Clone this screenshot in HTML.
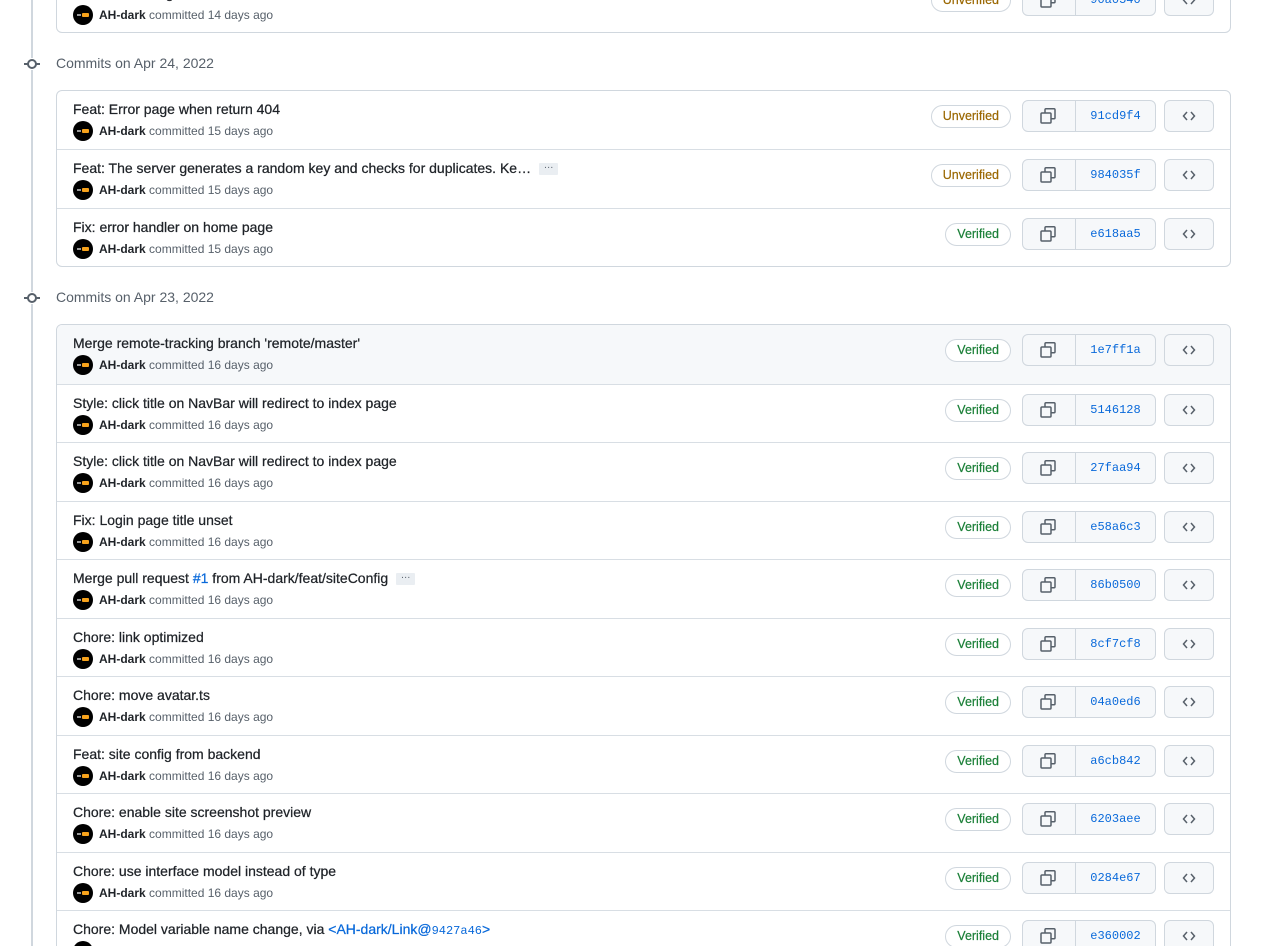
<!DOCTYPE html>
<html style="width:1269px;height:946px;overflow:hidden"><head><meta charset="utf-8"><style>
*{box-sizing:border-box;margin:0;padding:0}
body{width:1269px;height:946px;overflow:hidden;background:#fff;font-family:"Liberation Sans",sans-serif;position:relative;color:#1f2328}
.line{position:absolute;left:31px;width:2px;background:#d0d7de}
.hd{position:absolute;left:24px;height:20px;width:400px}
.hd .ic{position:absolute;left:0;top:9px;width:16px;height:2px;background:#57606a}
.hd .ic::after{content:"";position:absolute;left:3px;top:-4px;width:10px;height:10px;border:2px solid #57606a;border-radius:50%;background:#fff;box-sizing:border-box}
.hd span{position:absolute;left:32px;top:1px;font-size:14px;color:#57606a}
.box{position:absolute;left:56px;width:1175px;border:1px solid #d0d7de;border-radius:6px;overflow:hidden;background:#fff}
.row{position:absolute;left:0;width:1173px;border-top:1px solid #d8dee4}
.row.first{border-top:none}
.row.hl{background:#f6f8fa}
.t{position:absolute;left:16px;top:8px;font-size:14px;line-height:20px;color:#1f2328;white-space:nowrap;-webkit-text-stroke:0.25px #1f2328}
.t a{color:#0969da;text-decoration:none;-webkit-text-stroke:0.25px #0969da}
.t code{font-family:"Liberation Mono",monospace;font-size:12px;color:#0969da;-webkit-text-stroke:0}
.dots{display:inline-block;width:19px;height:12px;background:#eaeef2;border-radius:1px;vertical-align:middle;margin-left:8px;font-size:10px;line-height:6px;text-align:center;color:#57606a;-webkit-text-stroke:0}
.a{position:absolute;left:16px;top:30px;height:20px;font-size:12px;line-height:20px;color:#57606a;white-space:nowrap}
.av{display:inline-block;width:20px;height:20px;border-radius:50%;background:#000;vertical-align:top;margin-right:6px;position:relative}
.av::after{content:"";position:absolute;left:9px;top:8px;width:7px;height:4px;background:#f7a21b;border-radius:1px}
.av::before{content:"";position:absolute;left:4px;top:9px;width:4px;height:2px;background:#999}
.a b{color:#1f2328;font-weight:bold}
.bd{position:absolute;right:219px;top:14px;height:23px;padding:0 11px;border:1px solid #d0d7de;border-radius:12px;font-size:12.5px;line-height:21px;background:#fff}
.bd.v{color:#1a7f37;-webkit-text-stroke:0.2px #1a7f37}.bd.u{color:#9a6700;-webkit-text-stroke:0.2px #9a6700}
.grp{position:absolute;left:965px;top:9px;width:134px;height:32px;border:1px solid #d0d7de;border-radius:6px;background:#f6f8fa}
.grp .cp{position:absolute;left:0;top:0;width:53px;height:30px;border-right:1px solid #d0d7de}
.grp .cp svg{position:absolute;left:16px;top:6px}
.grp .h{position:absolute;left:53px;top:0;width:79px;height:30px;text-align:center;font-family:"Liberation Mono",monospace;font-size:12px;line-height:30px;color:#0969da}
.cd{position:absolute;left:1107px;top:9px;width:50px;height:32px;border:1px solid #d0d7de;border-radius:6px;background:#f6f8fa}
.cd svg{position:absolute;left:16px;top:7px}
</style></head><body>
<svg width="0" height="0" style="position:absolute"><defs>
<symbol id="cp" viewBox="0 0 18 18"><g fill="none" stroke="#57606a" stroke-width="1.5"><path d="M6 6V2.8a1 1 0 0 1 1-1h8a1 1 0 0 1 1 1v8a1 1 0 0 1-1 1H12"/><rect x="2" y="6" width="10" height="10" rx="1"/></g></symbol>
<symbol id="cd" viewBox="0 0 16 16"><path d="M6 4L2.5 8 6 12M10 4l3.5 4-3.5 4" fill="none" stroke="#57606a" stroke-width="1.5"/></symbol>
</defs></svg>
<div class="line" style="top:0;height:58px"></div>
<div class="line" style="top:70px;height:222px"></div>
<div class="line" style="top:304px;height:642px"></div>

<div class="box" style="top:-60px;height:93px">
<div class="row first" style="top:34px;height:59px">
<div class="t">Feat: something else</div>
<div class="a"><span class="av"></span><b>AH-dark</b> committed 14 days ago</div>
<div class="bd u">Unverified</div>
<div class="grp"><div class="cp"><svg width="18" height="18"><use href="#cp"/></svg></div><div class="h">90a0540</div></div>
<div class="cd"><svg width="16" height="16"><use href="#cd"/></svg></div>
</div></div>

<div class="hd" style="top:54px"><div class="ic"></div><span>Commits on Apr 24, 2022</span></div>

<div class="box" style="top:90px;height:177px">
<div class="row first" style="top:0;height:59px"><div class="t">Feat: Error page when return 404</div><div class="a"><span class="av"></span><b>AH-dark</b> committed 15 days ago</div><div class="bd u">Unverified</div><div class="grp"><div class="cp"><svg width="18" height="18"><use href="#cp"/></svg></div><div class="h">91cd9f4</div></div><div class="cd"><svg width="16" height="16"><use href="#cd"/></svg></div></div>
<div class="row" style="top:58px;height:59px"><div class="t">Feat: The server generates a random key and checks for duplicates. Ke…<span class="dots">…</span></div><div class="a"><span class="av"></span><b>AH-dark</b> committed 15 days ago</div><div class="bd u">Unverified</div><div class="grp"><div class="cp"><svg width="18" height="18"><use href="#cp"/></svg></div><div class="h">984035f</div></div><div class="cd"><svg width="16" height="16"><use href="#cd"/></svg></div></div>
<div class="row" style="top:117px;height:59px"><div class="t">Fix: error handler on home page</div><div class="a"><span class="av"></span><b>AH-dark</b> committed 15 days ago</div><div class="bd v">Verified</div><div class="grp"><div class="cp"><svg width="18" height="18"><use href="#cp"/></svg></div><div class="h">e618aa5</div></div><div class="cd"><svg width="16" height="16"><use href="#cd"/></svg></div></div>
</div>

<div class="hd" style="top:288px"><div class="ic"></div><span>Commits on Apr 23, 2022</span></div>

<div class="box" style="top:324px;height:640px">
<div class="row first hl" style="top:0;height:60px"><div class="t">Merge remote-tracking branch 'remote/master'</div><div class="a"><span class="av"></span><b>AH-dark</b> committed 16 days ago</div><div class="bd v">Verified</div><div class="grp"><div class="cp"><svg width="18" height="18"><use href="#cp"/></svg></div><div class="h">1e7ff1a</div></div><div class="cd"><svg width="16" height="16"><use href="#cd"/></svg></div></div>
<div class="row" style="top:59px;height:59px"><div class="t">Style: click title on NavBar will redirect to index page</div><div class="a"><span class="av"></span><b>AH-dark</b> committed 16 days ago</div><div class="bd v">Verified</div><div class="grp"><div class="cp"><svg width="18" height="18"><use href="#cp"/></svg></div><div class="h">5146128</div></div><div class="cd"><svg width="16" height="16"><use href="#cd"/></svg></div></div>
<div class="row" style="top:117px;height:59px"><div class="t">Style: click title on NavBar will redirect to index page</div><div class="a"><span class="av"></span><b>AH-dark</b> committed 16 days ago</div><div class="bd v">Verified</div><div class="grp"><div class="cp"><svg width="18" height="18"><use href="#cp"/></svg></div><div class="h">27faa94</div></div><div class="cd"><svg width="16" height="16"><use href="#cd"/></svg></div></div>
<div class="row" style="top:176px;height:59px"><div class="t">Fix: Login page title unset</div><div class="a"><span class="av"></span><b>AH-dark</b> committed 16 days ago</div><div class="bd v">Verified</div><div class="grp"><div class="cp"><svg width="18" height="18"><use href="#cp"/></svg></div><div class="h">e58a6c3</div></div><div class="cd"><svg width="16" height="16"><use href="#cd"/></svg></div></div>
<div class="row" style="top:234px;height:59px"><div class="t">Merge pull request <a>#1</a> from AH-dark/feat/siteConfig<span class="dots">…</span></div><div class="a"><span class="av"></span><b>AH-dark</b> committed 16 days ago</div><div class="bd v">Verified</div><div class="grp"><div class="cp"><svg width="18" height="18"><use href="#cp"/></svg></div><div class="h">86b0500</div></div><div class="cd"><svg width="16" height="16"><use href="#cd"/></svg></div></div>
<div class="row" style="top:293px;height:59px"><div class="t">Chore: link optimized</div><div class="a"><span class="av"></span><b>AH-dark</b> committed 16 days ago</div><div class="bd v">Verified</div><div class="grp"><div class="cp"><svg width="18" height="18"><use href="#cp"/></svg></div><div class="h">8cf7cf8</div></div><div class="cd"><svg width="16" height="16"><use href="#cd"/></svg></div></div>
<div class="row" style="top:351px;height:59px"><div class="t">Chore: move avatar.ts</div><div class="a"><span class="av"></span><b>AH-dark</b> committed 16 days ago</div><div class="bd v">Verified</div><div class="grp"><div class="cp"><svg width="18" height="18"><use href="#cp"/></svg></div><div class="h">04a0ed6</div></div><div class="cd"><svg width="16" height="16"><use href="#cd"/></svg></div></div>
<div class="row" style="top:410px;height:59px"><div class="t">Feat: site config from backend</div><div class="a"><span class="av"></span><b>AH-dark</b> committed 16 days ago</div><div class="bd v">Verified</div><div class="grp"><div class="cp"><svg width="18" height="18"><use href="#cp"/></svg></div><div class="h">a6cb842</div></div><div class="cd"><svg width="16" height="16"><use href="#cd"/></svg></div></div>
<div class="row" style="top:468px;height:59px"><div class="t">Chore: enable site screenshot preview</div><div class="a"><span class="av"></span><b>AH-dark</b> committed 16 days ago</div><div class="bd v">Verified</div><div class="grp"><div class="cp"><svg width="18" height="18"><use href="#cp"/></svg></div><div class="h">6203aee</div></div><div class="cd"><svg width="16" height="16"><use href="#cd"/></svg></div></div>
<div class="row" style="top:527px;height:59px"><div class="t">Chore: use interface model instead of type</div><div class="a"><span class="av"></span><b>AH-dark</b> committed 16 days ago</div><div class="bd v">Verified</div><div class="grp"><div class="cp"><svg width="18" height="18"><use href="#cp"/></svg></div><div class="h">0284e67</div></div><div class="cd"><svg width="16" height="16"><use href="#cd"/></svg></div></div>
<div class="row" style="top:585px;height:75px"><div class="t">Chore: Model variable name change, via <a>&lt;AH-dark/Link@<code>9427a46</code>&gt;</a></div><div class="a"><span class="av"></span><b>AH-dark</b> committed 16 days ago</div><div class="bd v">Verified</div><div class="grp"><div class="cp"><svg width="18" height="18"><use href="#cp"/></svg></div><div class="h">e360002</div></div><div class="cd"><svg width="16" height="16"><use href="#cd"/></svg></div></div>
</div>
</body></html>
